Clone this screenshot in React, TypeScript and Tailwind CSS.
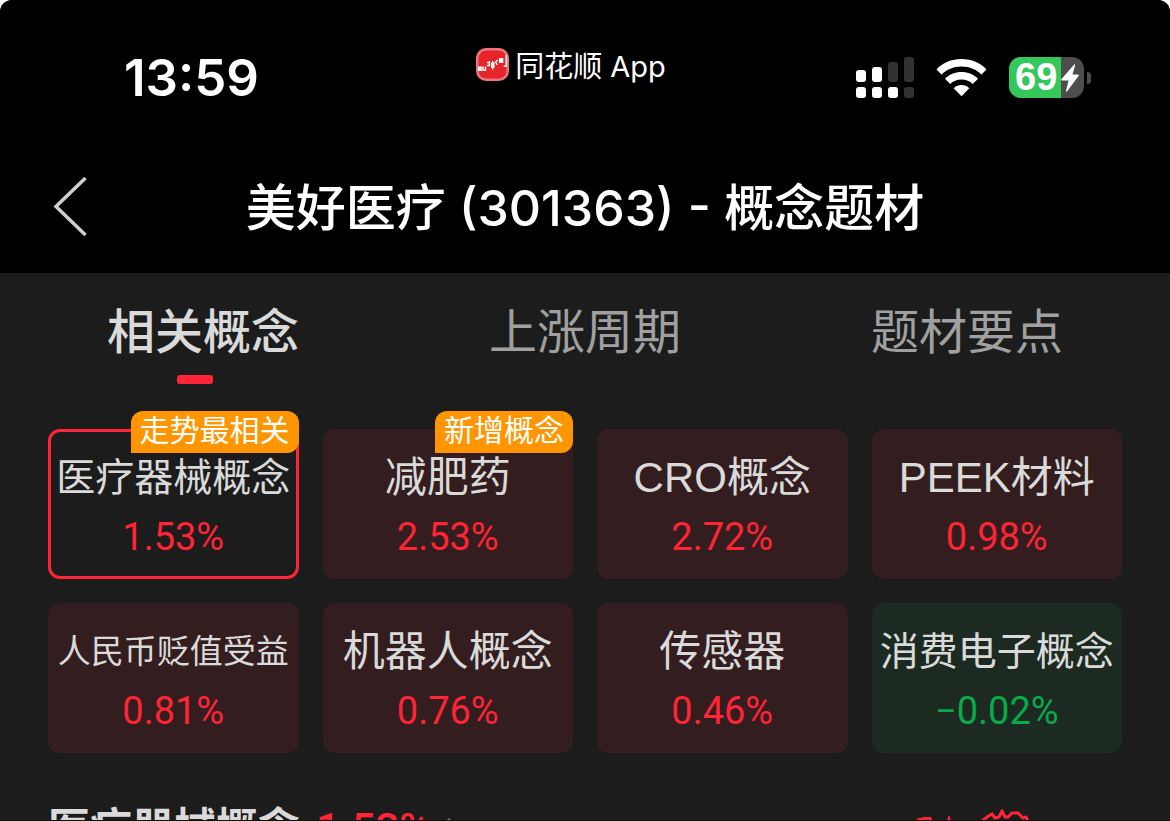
import { clsx } from "clsx";

type Concept = {
  name: string;
  change: number;
  badge?: string;
  selected?: boolean;
};

const concepts: Concept[] = [
  { name: "医疗器械概念", change: 1.53, badge: "走势最相关", selected: true },
  { name: "减肥药", change: 2.53, badge: "新增概念" },
  { name: "CRO概念", change: 2.72 },
  { name: "PEEK材料", change: 0.98 },
  { name: "人民币贬值受益", change: 0.81 },
  { name: "机器人概念", change: 0.76 },
  { name: "传感器", change: 0.46 },
  { name: "消费电子概念", change: -0.02 },
];

const tabs = ["相关概念", "上涨周期", "题材要点"];

// long names step down so they stay on one line
function nameSize(name: string) {
  if (name.length >= 7) return "text-[33px]";
  if (name.length === 6 && !/[A-Z]/.test(name)) return "text-[39px]";
  return "text-[42px]";
}

function formatChange(value: number) {
  return `${value < 0 ? "−" : ""}${Math.abs(value).toFixed(2)}%`;
}

function AppLogo() {
  return (
    <svg viewBox="0 0 33 33" className="size-[33px]" aria-hidden>
      <rect width="33" height="33" rx="10" fill="#f0757b" />
      <rect x="2.5" y="2.5" width="28" height="28" rx="8" fill="#e5252b" />
      <g fill="#fff">
        <rect x="2" y="18.5" width="3.8" height="4.5" />
        <rect x="15" y="14.500" width="3.500" height="5.500" />
        <rect x="16" y="13" width="1.300" height="8.500" />
        <rect x="23" y="10" width="4.300" height="5" />
      </g>
      <g fill="none" stroke="#fff" strokeWidth="1.400">
        <path d="M7 18.500v3.800h2.500V18.500" />
        <path d="M11 14.500h2.400v3H11M13.400 13V18" />
        <path d="M21.800 12l-2.200 2.200 1.700 2.800" />
        <path d="M27.700 18.300h2.500V7" />
      </g>
    </svg>
  );
}

function SignalIcon() {
  return (
    <svg viewBox="0 0 58 41" className="h-[41px] w-[58px]" aria-label="信号">
      <g fill="#fff">
        <rect y="13" width="10" height="12" rx="3" />
        <rect x="16" y="10" width="10" height="15" rx="3" />
        <rect y="30" width="10" height="11" rx="3" />
        <rect x="16" y="30" width="10" height="11" rx="3" />
        <rect x="32" y="30" width="10" height="11" rx="3" />
      </g>
      <g fill="#323232">
        <rect x="32" y="5" width="10" height="20" rx="3" />
        <rect x="48" width="10" height="25" rx="3" />
        <rect x="48" y="30" width="10" height="11" rx="3" />
      </g>
    </svg>
  );
}

function WifiIcon() {
  return (
    <svg viewBox="0 0 51 38" className="h-[38px] w-[51px]" aria-label="Wi-Fi">
      <g fill="#fff">
        <path d="M25.5 0C35.5 0 44.5 4 50.5 10.400L45.500 15.500C40.500 10.500 33.500 7.500 25.500 7.500S10.500 10.500 5.500 15.500L.5 10.400C6.500 4 15.500 0 25.500 0Z" />
        <path d="M25.500 13C32 13 38 15.600 42 19.800L36.800 25C34 22.200 30 20.500 25.500 20.500S17 22.200 14.200 25L9 19.800C13 15.600 19 13 25.500 13Z" />
        <path d="M25.500 26C28.600 26 31.200 27.200 33.300 29.200L25.500 37.300L17.700 29.200C19.800 27.200 22.400 26 25.500 26Z" />
      </g>
    </svg>
  );
}

function Battery({ level }: { level: number }) {
  return (
    <div className="flex items-center gap-[3px]">
      <div className="relative flex h-[41px] w-[75px] items-center overflow-hidden rounded-[12px] bg-[#4d4d4d] pl-1.5">
        <div className="absolute inset-y-0 left-0 bg-[#34c759]" style={{ width: `${level}%` }} />
        <span className="relative text-[38px] leading-[41px] font-bold">{level}</span>
        <svg viewBox="0 0 18 28" className="absolute right-[5px] h-7 w-[18px]" aria-hidden>
          <path
            d="M13 .8C13.600 0 14.300 .4 14.100 1.200L11.500 10.500H17C18 10.500 18 11.300 17.500 12L6.200 27.200C5.600 28 4.800 27.600 5 26.800L7.600 16.500H1C0 16.500-.1 15.700 .5 15Z"
            fill="#fff"
          />
        </svg>
      </div>
      <div className="h-3 w-1 rounded-r-full bg-[#4d4d4d]" />
    </div>
  );
}

function ConceptCard({ name, change, badge, selected }: Concept) {
  const down = change < 0;
  return (
    <button
      className={clsx(
        "relative flex h-[150px] flex-col items-center rounded-[12px] pt-5",
        selected && "ring-[3px] ring-[#ff2436] ring-inset",
        !selected && (down ? "bg-[#1c2a22]" : "bg-[#331d1f]"),
      )}
    >
      {badge && (
        <span className="absolute -top-[18px] right-0 h-[42px] rounded-[12px] rounded-bl-none bg-[#ff9500] px-[9px] text-[30px] leading-[40px] text-white">
          {badge}
        </span>
      )}
      <span className={clsx("leading-[58px] whitespace-nowrap text-[#dadada]", nameSize(name))}>
        {name}
      </span>
      <span
        className={clsx(
          "mt-1 font-['Roboto'] text-[38px] leading-[52px]",
          down ? "text-[#07ab4b]" : "text-[#ff2436]",
        )}
      >
        {formatChange(change)}
      </span>
    </button>
  );
}

export default function App() {
  return (
    <div className="h-screen bg-white">
      <main className="flex h-full flex-col overflow-hidden rounded-t-[12px] border-b border-[#101010] bg-[#1c1c1c] font-['Liberation_Sans','Noto_Sans_CJK_SC',sans-serif]">
        <header className="shrink-0 bg-black text-white">
          <div className="grid h-[140px] grid-cols-3 items-start">
            <time className="pt-[50px] pl-[124px] font-['Inter'] text-[51px] leading-[56px] font-semibold">
              13:59
            </time>
            <div className="flex items-start justify-center gap-1.5 pt-12 pr-7 font-['Inter','Noto_Sans_CJK_SC',sans-serif] text-[29px] leading-[38px]">
              <AppLogo />
              <span>同花顺 App</span>
            </div>
            <div className="flex items-center justify-end gap-[22px] pt-[57px] pr-[79px]">
              <SignalIcon />
              <WifiIcon />
              <Battery level={69} />
            </div>
          </div>
          <div className="grid h-[133px] grid-cols-[120px_1fr_120px] items-center">
            <button aria-label="返回" className="pl-[52px]">
              <svg viewBox="0 0 36 60" className="h-[60px] w-9" aria-hidden>
                <path d="M33.5 1L4 29.500L33.500 58" fill="none" stroke="#cfcfcf" strokeWidth="3.500" />
              </svg>
            </button>
            <h1 className="pt-0.5 text-center font-['Inter','Noto_Sans_CJK_SC',sans-serif] text-[50px] leading-[60px] font-medium whitespace-nowrap">
              美好医疗 (301363) - 概念题材
            </h1>
          </div>
        </header>

        <nav className="shrink-0 pt-6">
          <div className="grid grid-cols-3 px-3">
            {tabs.map((tab, i) => (
              <button
                key={tab}
                className={clsx(
                  "text-[48px] leading-[72px]",
                  i === 0 ? "font-medium text-[#dadada]" : "text-[#a0a0a0]",
                )}
              >
                {tab}
              </button>
            ))}
          </div>
          <div className="mt-1.5 grid grid-cols-3">
            <span className="mx-auto h-[9px] w-9 rounded-[3px] bg-[#ff2436]" />
          </div>
        </nav>

        <section className="mt-[45px] grid shrink-0 grid-cols-4 gap-6 px-12">
          {concepts.map((concept) => (
            <ConceptCard key={concept.name} {...concept} />
          ))}
        </section>

        <section className="mt-12 flex shrink-0 items-start justify-between px-12">
          <a href="#concept" className="flex items-center gap-4 text-[42px] leading-[56px]">
            <h2 className="font-bold text-[#dadada]">医疗器械概念</h2>
            <span className="font-['Roboto'] font-medium text-[#ff2436]">1.53%</span>
            <svg viewBox="0 0 14 24" className="h-6 w-3.5" fill="none" stroke="#7a7a7a" strokeWidth="3">
              <path d="M2 2l10 10L2 22" />
            </svg>
          </a>
          <svg viewBox="0 0 210 60" className="mt-2 h-[60px] w-[210px]" aria-hidden>
            <path
              d="M0 40L6 11L12 9.500L18 9.500L22 18L34 18L37 10L40 18L68 14L75 8L80 5L83 9L87 8L90 2L93 8L96 8L100 4L106 4L111 9L114 8L118 16L130 24L210 40"
              fill="none"
              stroke="#ff2436"
              strokeWidth="3"
            />
          </svg>
        </section>
      </main>
    </div>
  );
}
